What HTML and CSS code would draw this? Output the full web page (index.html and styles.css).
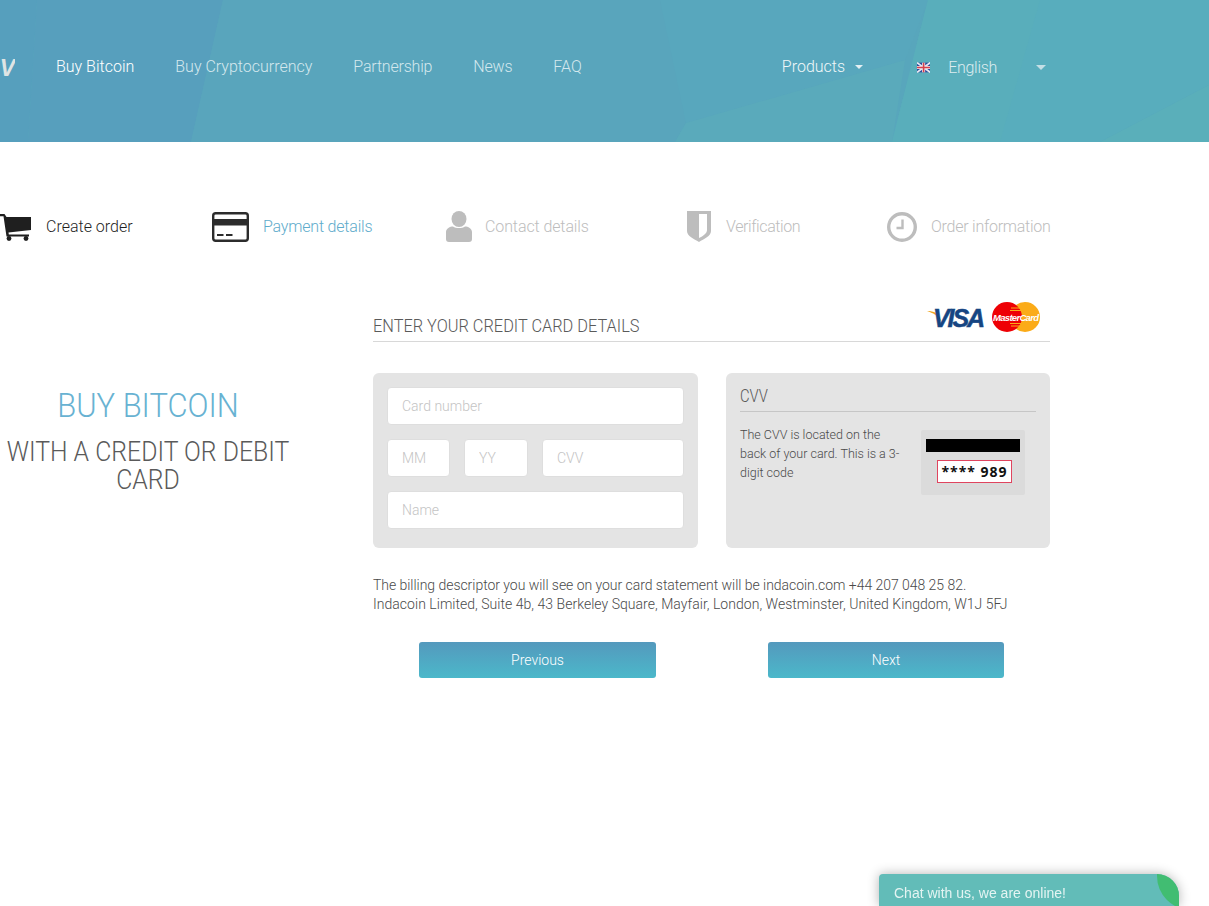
FILE: index.html
```html
<!DOCTYPE html>
<html lang="en">
<head>
  <meta charset="UTF-8">
  <meta name="viewport" content="width=device-width, initial-scale=1.0">
  <title>Buy Bitcoin with a credit or debit card</title>
  <link rel="stylesheet" href="styles.css">
</head>
<body>
  <header class="header">
    <svg class="header-bg" viewBox="0 0 1209 142" preserveAspectRatio="none" aria-hidden="true">
      <polygon points="0,0 37,0 28,142 0,142" fill="#569fbd"/>
      <polygon points="37,0 223,0 191,142 28,142" fill="#579fbd"/>
      <polygon points="223,0 660,0 680,70 686,123 675,142 191,142" fill="#59a5bc"/>
      <polygon points="660,0 928,0 905,60 686,123" fill="#58a7bd"/>
      <polygon points="686,123 905,60 892,142 675,142" fill="#5aaabb"/>
      <polygon points="928,0 1209,0 1209,85 1100,142 892,142" fill="#58adbd"/>
      <polygon points="928,0 1040,0 1000,142 892,142" fill="#59aebb"/>
      <polygon points="1209,85 1209,142 1100,142" fill="#5aafba"/>
    </svg>
    <nav class="nav">
      <span class="logo">V</span>
      <a class="nav-link active" href="#">Buy Bitcoin</a>
      <a class="nav-link" href="#">Buy Cryptocurrency</a>
      <a class="nav-link nav-link-tight" href="#">Partnership</a>
      <a class="nav-link nav-link-tight" href="#">News</a>
      <a class="nav-link" href="#">FAQ</a>
      <a class="nav-link products" href="#">Products <span class="caret"></span></a>
      <div class="lang">
        <svg class="flag" viewBox="0 0 15 11" aria-hidden="true">
          <rect width="15" height="11" fill="#2f4a9c"/>
          <path d="M0 0L15 11M15 0L0 11" stroke="#e8e8f0" stroke-width="2"/>
          <path d="M7.5 0V11M0 5.5H15" stroke="#e8e8f0" stroke-width="3.5"/>
          <path d="M7.5 0V11M0 5.5H15" stroke="#d9404a" stroke-width="1.8"/>
        </svg>
        <span class="lang-name">English</span>
        <span class="caret lang-caret"></span>
      </div>
    </nav>
  </header>

  <ul class="steps">
    <li class="step step-done">
      <svg class="step-icon cart" viewBox="0 0 33 28" aria-hidden="true">
        <path d="M0 1H5.5L7.5 4H32V17L9.5 19.500L9.800 21.500H30V23.500H7.500L4.500 3.200H0Z" fill="#1f1f1f"/>
        <circle cx="10" cy="25.500" r="2.400" fill="#1f1f1f"/>
        <circle cx="27" cy="25.500" r="2.400" fill="#1f1f1f"/>
      </svg>
      <span>Create order</span>
    </li>
    <li class="step step-current">
      <svg class="step-icon card" viewBox="0 0 37 30" aria-hidden="true">
        <rect x="1.200" y="1.200" width="34.600" height="27.600" rx="2.500" fill="#fff" stroke="#2c2c2c" stroke-width="2.400"/>
        <rect x="1" y="7" width="35" height="6.500" fill="#2c2c2c"/>
        <rect x="5" y="22" width="6.500" height="2" fill="#2c2c2c"/>
        <rect x="14" y="22" width="6.500" height="2" fill="#2c2c2c"/>
      </svg>
      <span>Payment details</span>
    </li>
    <li class="step step-contact">
      <svg class="step-icon person" viewBox="0 0 26 31" aria-hidden="true">
        <ellipse cx="13" cy="8" rx="7.500" ry="8" fill="#bdbdbd"/>
        <path d="M0 21C0 17.500 4 15.500 7 15.500C10 17.500 16 17.500 19 15.500C22 15.500 26 17.500 26 21V28C26 30 25 31 23 31H3C1 31 0 30 0 28Z" fill="#bdbdbd"/>
      </svg>
      <span>Contact details</span>
    </li>
    <li class="step step-verify">
      <svg class="step-icon shield" viewBox="0 0 24 31" aria-hidden="true">
        <path d="M0 0H24V20C24 25 17 28 12 31C7 28 0 25 0 20Z" fill="#bdbdbd"/>
        <path d="M12 3H20V19C20 22.500 16 25 12 27Z" fill="#fff"/>
      </svg>
      <span>Verification</span>
    </li>
    <li class="step step-info">
      <svg class="step-icon clock" viewBox="0 0 30 30" aria-hidden="true">
        <circle cx="15" cy="15" r="13.300" fill="none" stroke="#bdbdbd" stroke-width="3.400"/>
        <path d="M15.500 7.500V16H9.500" fill="none" stroke="#bdbdbd" stroke-width="2.400"/>
      </svg>
      <span>Order information</span>
    </li>
  </ul>

  <main class="content">
    <aside class="promo">
      <h1 class="promo-title">BUY BITCOIN</h1>
      <h2 class="promo-sub">WITH A CREDIT OR DEBIT CARD</h2>
    </aside>

    <section class="details">
      <div class="details-head">
        <h3 class="details-title">ENTER YOUR CREDIT CARD DETAILS</h3>
        <div class="card-logos">
          <svg class="visa" viewBox="0 0 66 35" aria-hidden="true">
            <path d="M2 14C9 14 14 15.500 16 24.500C13 18.500 8 16 2 14Z" fill="#f0a51e"/>
            <text x="8" y="30" textLength="52" class="visa-text">VISA</text>
          </svg>
          <svg class="mastercard" viewBox="0 0 48 30" aria-hidden="true">
            <circle cx="33" cy="15" r="15" fill="#fbab18"/>
            <circle cx="15" cy="15" r="15" fill="#ee0005"/>
            <path d="M19 6H29M18 8.500H30M18 21.500H30M19 24H29" stroke="#fbab18" stroke-width="1"/>
            <text x="24" y="18.500" textLength="46" class="mc-text">MasterCard</text>
          </svg>
        </div>
      </div>

      <div class="panels">
        <form class="panel card-form">
          <input class="field" type="text" placeholder="Card number">
          <div class="field-row">
            <input class="field field-mm" type="text" placeholder="MM">
            <input class="field field-yy" type="text" placeholder="YY">
            <input class="field field-cvv" type="text" placeholder="CVV">
          </div>
          <input class="field" type="text" placeholder="Name">
        </form>

        <div class="panel cvv-panel">
          <h4 class="cvv-title"><span class="cvv-title-text">CVV</span></h4>
          <div class="cvv-body">
            <p class="cvv-text">The CVV is located on the back of your card. This is a 3-digit code</p>
            <div class="cvv-pic">
              <div class="cvv-stripe"></div>
              <div class="cvv-code">**** 989</div>
            </div>
          </div>
        </div>
      </div>

      <p class="billing">
        <span class="billing-first">The billing descriptor you will see on your card statement will be indacoin.com +44 207 048 25 82.</span><br>
        <span class="billing-second">Indacoin Limited, Suite 4b, 43 Berkeley Square, Mayfair, London, Westminster, United Kingdom, W1J 5FJ</span>
      </p>

      <div class="actions">
        <button class="button button-prev" type="button">Previous</button>
        <button class="button button-next" type="button">Next</button>
      </div>
    </section>
  </main>

  <div class="chat">
    <span>Chat with us, we are online!</span>
    <span class="chat-dot"></span>
  </div>
</body>
</html>
```

FILE: styles.css
```css
* {
  box-sizing: border-box;
}

html, body {
  height: 100%;
}

body {
  margin: 0;
  font-family: "Roboto", "Liberation Sans", sans-serif;
  font-weight: 300;
  color: #4a4a4a;
  background-color: #fff;
  overflow: hidden;
}

.header {
  position: relative;
  height: 142px;
  background-color: #58a6bc;
}

.header-bg {
  position: absolute;
  top: 0;
  left: 0;
  width: 100%;
  height: 100%;
}

.nav {
  position: relative;
  display: flex;
  align-items: center;
  height: 132px;
  padding-right: 163px;
}

.logo {
  width: 20px;
  margin-top: 5px;
  margin-left: -5px;
  margin-right: 41px;
  overflow: hidden;
  direction: rtl;
  font-family: "Liberation Sans", sans-serif;
  font-size: 23px;
  font-weight: 700;
  font-style: italic;
  color: #dfe4e4;
}

.nav-link {
  margin-right: 41px;
  font-size: 16px;
  color: #d4e8ee;
  text-decoration: none;
}

.nav-link-tight {
  letter-spacing: -0.2px;
}

.nav-link.active {
  color: #fff;
}

.products {
  margin-left: auto;
  margin-right: 54px;
  color: #f0f7f9;
}

.caret {
  display: inline-block;
  margin-left: 6px;
  vertical-align: 3px;
  border-left: 4px solid transparent;
  border-right: 4px solid transparent;
  border-top: 4px solid #e4f0f4;
}

.lang {
  display: flex;
  align-items: center;
  width: 129px;
  padding-top: 2px;
}

.flag {
  width: 15px;
  height: 11px;
  margin-right: 18px;
}

.lang-name {
  font-size: 16px;
  letter-spacing: -0.3px;
  color: #dcecf0;
}

.lang-caret {
  margin-left: 39px;
  border-left-width: 5px;
  border-right-width: 5px;
  border-top-width: 5px;
  border-top-color: #c4dfe6;
  vertical-align: 0;
}

.steps {
  display: flex;
  align-items: center;
  height: 31px;
  margin: 69px 0 0;
  padding: 0;
  list-style: none;
  font-size: 16px;
}

.step {
  display: flex;
  align-items: center;
  color: #bdbdbd;
}

.step-done {
  width: 212px;
  color: #1f1f1f;
}

.step-current {
  width: 234px;
  letter-spacing: -0.2px;
  color: #5eabcb;
}

.step-contact {
  width: 241px;
  letter-spacing: -0.1px;
}

.step-verify {
  width: 200px;
  letter-spacing: -0.4px;
}

.step-info {
  letter-spacing: -0.25px;
}

.step-icon {
  display: block;
  flex: none;
}

.cart {
  width: 33px;
  height: 28px;
  margin-left: -1px;
  margin-right: 14px;
}

.card {
  width: 37px;
  height: 30px;
  margin-right: 14px;
}

.person {
  width: 26px;
  height: 31px;
  margin-right: 13px;
}

.shield {
  width: 24px;
  height: 31px;
  margin-right: 15px;
}

.clock {
  width: 30px;
  height: 30px;
  margin-right: 14px;
}

.content {
  display: flex;
  margin-top: 61px;
}

.promo {
  flex: none;
  width: 296px;
  margin-right: 77px;
  padding-top: 83px;
  text-align: center;
}

.promo-title {
  margin: 0;
  font-size: 34px;
  font-weight: 300;
  line-height: 38px;
  color: #68b2d2;
  transform: scaleX(0.91);
}

.promo-sub {
  width: 370px;
  margin: 14px 0 0 -37px;
  font-size: 28px;
  font-weight: 300;
  line-height: 28px;
  color: #5a5a5a;
  transform: scaleX(0.886);
}

.details {
  width: 677px;
}

.details-head {
  display: flex;
  align-items: flex-end;
  justify-content: space-between;
  height: 39px;
  padding: 0 10px 9px 0;
  border-bottom: 1px solid #d8d8d8;
}

.details-title {
  margin: 0 0 -4px;
  font-size: 18px;
  font-weight: 300;
  white-space: nowrap;
  color: #5a5a5a;
  transform: scaleX(0.908);
  transform-origin: left center;
}

.card-logos {
  display: flex;
  align-items: flex-end;
  gap: 0;
}

.visa {
  width: 66px;
  height: 35px;
  margin-right: 1px;
}

.visa-text {
  font-family: "Liberation Sans", sans-serif;
  font-size: 25px;
  font-weight: 700;
  font-style: italic;
  fill: #164582;
  stroke: #164582;
  stroke-width: 0.5;
}

.mastercard {
  width: 48px;
  height: 30px;
}

.mc-text {
  font-family: "Liberation Sans", sans-serif;
  font-size: 9.500px;
  font-weight: 700;
  font-style: italic;
  text-anchor: middle;
  fill: #fff;
}

.panels {
  display: flex;
  justify-content: space-between;
  margin-top: 31px;
}

.panel {
  height: 175px;
  border-radius: 6px;
  background-color: #e4e4e4;
}

.card-form {
  display: flex;
  flex-direction: column;
  gap: 14px;
  width: 325px;
  padding: 14px;
}

.field-row {
  display: flex;
  gap: 14px;
}

.field {
  width: 100%;
  height: 38px;
  padding: 0 14px;
  border: 1px solid #dedede;
  border-radius: 4px;
  background-color: #fff;
  font-family: "Roboto", "Liberation Sans", sans-serif;
  font-size: 14px;
  font-weight: 300;
}

.field::placeholder {
  color: #c4c4c4;
  opacity: 1;
}

.field-mm {
  flex: none;
  width: 63px;
}

.field-yy {
  flex: none;
  width: 64px;
}

.field-cvv {
  flex: 1;
  min-width: 0;
}

.cvv-panel {
  width: 324px;
  padding: 10px 14px;
}

.cvv-title {
  height: 29px;
  margin: 0;
  border-bottom: 1px solid #c6c6c6;
  font-size: 18px;
  font-weight: 300;
  line-height: 25px;
  color: #5a5a5a;
}

.cvv-title-text {
  display: inline-block;
  transform: scaleX(0.82);
  transform-origin: left center;
}

.cvv-body {
  display: flex;
  justify-content: space-between;
  padding: 13px 11px 0 0;
}

.cvv-text {
  width: 165px;
  margin: 0;
  font-size: 12.500px;
  line-height: 19px;
  color: #4a4a4a;
}

.cvv-pic {
  width: 104px;
  height: 65px;
  margin-top: 5px;
  padding: 9px 5px 0;
  border-radius: 2px;
  background-color: #dbdbdb;
}

.cvv-stripe {
  height: 13px;
  background-color: #000;
}

.cvv-code {
  width: 75px;
  height: 23px;
  margin: 8px 8px 0 11px;
  border: 1px solid #e0455f;
  background-color: #fff;
  font-family: "Open Sans", sans-serif;
  font-size: 14px;
  font-weight: 700;
  letter-spacing: 1px;
  line-height: 21px;
  text-align: center;
  color: #111;
}

.billing {
  margin: 28px 0 0;
  font-size: 14px;
  line-height: 19px;
  color: #4a4a4a;
}

.billing-first {
  letter-spacing: -0.04px;
}

.billing-second {
  letter-spacing: 0.03px;
}

.actions {
  display: flex;
  gap: 112px;
  margin: 28px 46px 0;
}

.button {
  width: 237px;
  height: 36px;
  border: none;
  border-radius: 3px;
  background: linear-gradient(#5499bd, #4bb8ca);
  color: #fff;
  font-family: "Roboto", "Liberation Sans", sans-serif;
  font-size: 14px;
  font-weight: 300;
  cursor: pointer;
}

.button-next {
  width: 236px;
}

.chat {
  position: fixed;
  right: 30px;
  bottom: 0;
  width: 300px;
  height: 32px;
  padding: 11px 15px 0;
  overflow: hidden;
  border-radius: 4px 22px 0 0;
  background-color: #62bcb8;
  box-shadow: 0 0 12px rgba(0, 0, 0, 0.3);
  font-family: "Liberation Sans", sans-serif;
  font-size: 14px;
  font-weight: 400;
  color: #e4f4f2;
}

.chat-dot {
  position: absolute;
  top: -32px;
  right: -46px;
  width: 68px;
  height: 68px;
  border-radius: 50%;
  background-color: #41bd72;
}
```
